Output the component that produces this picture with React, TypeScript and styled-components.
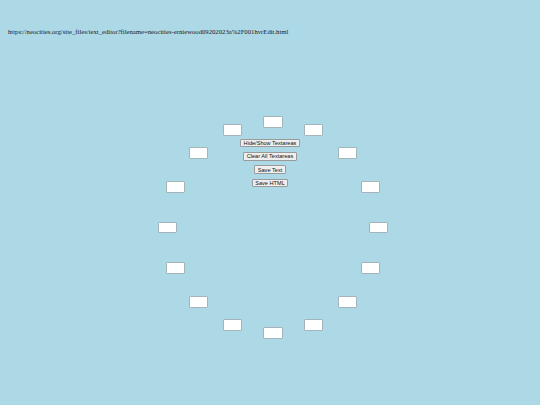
import React from 'react';
import styled, { createGlobalStyle } from 'styled-components';

const GlobalStyle = createGlobalStyle`
  html, body {
    margin: 0;
    padding: 0;
    background: #add8e6;
  }
`;

const Page = styled.div`
  width: 540px;
  height: 405px;
  overflow: hidden;
  font-family: "Liberation Serif", "Times New Roman", serif;
`;

const UrlLine = styled.div`
  padding: 28px 8px 0 8px;
  font-size: 6.7px;
  line-height: 8px;
  color: #1a1a1a;
  white-space: nowrap;
`;

const Ring = styled.div`
  position: relative;
  width: 232px;
  height: 232px;
  margin: 75.5px 0 0 157px;
`;

const Note = styled.textarea`
  position: absolute;
  box-sizing: border-box;
  width: 19.5px;
  height: 11.5px;
  margin: 0;
  padding: 0;
  resize: none;
  background: #fff;
  border: 1px solid #a3b4bb;
  border-radius: 1px;
  outline: none;
  overflow: hidden;
`;

const Controls = styled.div`
  display: flex;
  flex-direction: column;
  align-items: center;
  gap: 4.6px;
  padding: 27.2px 6px 0 0;
`;

const Button = styled.button`
  box-sizing: border-box;
  height: 8.7px;
  padding: 0 2.4px;
  margin: 0;
  font-family: "Liberation Sans", Arial, sans-serif;
  font-size: 5.6px;
  line-height: 6px;
  color: #111;
  background: #efefef;
  border: 0.6px solid #9a9a9a;
  border-radius: 1px;
  cursor: pointer;
`;

const COUNT = 16;
const RADIUS = 105.5;
const CENTER = 116;

const notes = Array.from({ length: COUNT }, (_, i) => {
  const angle = (i * 2 * Math.PI) / COUNT;
  return {
    left: CENTER + RADIUS * Math.sin(angle) - 9.75,
    top: CENTER - RADIUS * Math.cos(angle) - 5.75,
  };
});

export default function App() {
  return (
    <Page>
      <GlobalStyle />
      <UrlLine>
        https://neocities.org/site_files/text_editor?filename=neocities-erniewood09202023a%2F001hvrEdit.html
      </UrlLine>
      <Ring>
        {notes.map((p, i) => (
          <Note key={i} style={{ left: p.left, top: p.top }} />
        ))}
        <Controls>
          <Button>Hide/Show Textareas</Button>
          <Button>Clear All Textareas</Button>
          <Button>Save Text</Button>
          <Button>Save HTML</Button>
        </Controls>
      </Ring>
    </Page>
  );
}
